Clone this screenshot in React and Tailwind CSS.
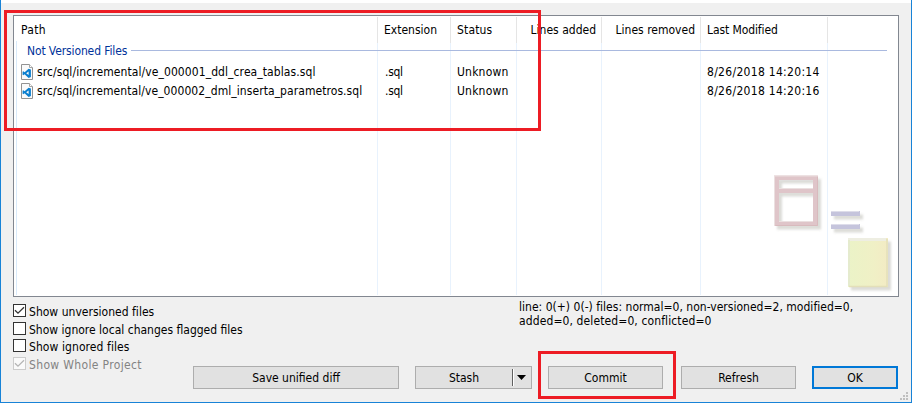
import React from "react";

const COLUMNS = "grid grid-cols-[364px_73px_66px_85px_99px_127px_70px]";

const files = [
  { path: "src/sql/incremental/ve_000001_ddl_crea_tablas.sql", spacing: "tracking-[0.085px]", date: "8/26/2018 14:20:14" },
  { path: "src/sql/incremental/ve_000002_dml_inserta_parametros.sql", spacing: "tracking-[0.07px]", date: "8/26/2018 14:20:16" },
];

function FileIcon() {
  return (
    <svg className="h-4 w-3 shrink-0" viewBox="0 0 12 16">
      <path d="M.5.5h8l3 3v12H.5z" fill="#fafafa" stroke="#929292" />
      <path d="M8.5.5v3h3" fill="#fff" stroke="#a5a5a5" />
      <path d="M7.600 4.700 9.900 5.600v7.500l-2.300.8-4-3.600-1.300 1-.7-.5V7.700l.7-.4 1.300 1zM7.600 7.600 5.200 9.300l2.400 1.800z" fill="#0a7fd0" fillRule="evenodd" />
    </svg>
  );
}

function Check({ label, checked, disabled, spacing = "", className = "" }) {
  return (
    <label className={`flex h-[13px] items-center ${className}`}>
      <span className={`h-[13px] w-[13px] shrink-0 border ${disabled ? "border-[#cccccc] bg-[#fafafa]" : "border-[#333333] bg-white"}`}>
        {checked && (
          <svg className="block h-[11px] w-[11px]" viewBox="0 0 11 11">
            <path d="M1 5.200 4 8.200 10 2.200" fill="none" stroke={disabled ? "#b5b5b5" : "#333"} strokeWidth="1.300" />
          </svg>
        )}
      </span>
      <span className={`ml-[3px] pt-[2px] ${spacing} ${disabled ? "text-[#838383]" : ""}`}>{label}</span>
    </label>
  );
}

function Watermark() {
  return (
    <svg className="absolute top-[154px] left-[756px] h-[126px] w-[126px]" viewBox="770 170 126 126">
      <defs>
        <filter id="shade" x="-20%" y="-50%" width="150%" height="250%">
          <feDropShadow dx="3" dy="3.500" stdDeviation="1.300" floodColor="#777766" floodOpacity=".26" />
        </filter>
        <linearGradient id="paper">
          <stop offset="0" stopColor="#ebf3c7" />
          <stop offset=".65" stopColor="#f0f0c6" />
          <stop offset="1" stopColor="#f3ebc4" />
        </linearGradient>
      </defs>
      <path filter="url(#shade)" d="M774 175.500h44v50.500h-44zM779 180v8h34v-8zM779 193v28h34v-28z" fill="#dfc5c9" fillRule="evenodd" />
      <path d="M774.500 226v-50h43M779 221.500h34M779 188.500h34" fill="none" stroke="#ebe0e0" />
      <path d="M817.500 177v48.500h-42" fill="none" stroke="#d8babd" />
      <g filter="url(#shade)" fill="#c5c4dc">
        <path d="M831 211h29v5h-29z" />
        <path d="M831 224h29v5h-29z" />
      </g>
      <path d="M831 211.500h28M831 224.500h28" stroke="#deddea" />
      <path filter="url(#shade)" d="M848 238h40v49h-40z" fill="url(#paper)" />
      <path d="M848 239.500h38" stroke="#eeeee2" strokeWidth="3" />
      <path d="M849 240v46" stroke="#e5ebce" strokeWidth="2" />
      <path d="M887 239v47.500h-38" fill="none" stroke="#e3dfb9" strokeWidth="1.500" />
    </svg>
  );
}

function Button({ children, className, border = "border border-[#adadad]" }) {
  return (
    <button className={`flex h-[23px] items-center justify-center bg-[#e1e1e1] ${border} ${className}`}>
      {children}
    </button>
  );
}

function Grip() {
  return (
    <svg className="absolute right-[3px] bottom-[2px] h-2 w-2" viewBox="0 0 8 8" fill="#bfbfbf" shapeRendering="crispEdges">
      <path d="M6 0h2v2H6zM3 3h2v2H3zM6 3h2v2H6zM0 6h2v2H0zM3 6h2v2H3zM6 6h2v2H6z" />
    </svg>
  );
}

export default function App() {
  return (
    <div className="relative flex h-[403px] w-[912px] flex-col overflow-hidden border-x border-b border-[#1883d7] bg-[#f0f0f0] font-['DejaVu_Sans_Condensed','DejaVu_Sans',sans-serif] text-[12px] leading-[14px] whitespace-nowrap text-black [font-stretch:condensed]">
      <div className="h-[3px] shrink-0 bg-white" />

      <section className="relative mt-3 ml-3 h-[282px] w-[886px] shrink-0 border border-[#828790] bg-white">
        <div className={`absolute inset-x-0 top-[25px] bottom-px ${COLUMNS}`}>
          {[0, 1, 2, 3, 4, 5].map((i) => (
            <div key={i} className="border-r border-[#e8f2fd]" />
          ))}
        </div>
        <div className="absolute top-[25px] bottom-px left-[2px] w-px bg-[#d9eafa]" />
        <Watermark />

        <div className={`relative mt-px h-6 leading-[26px] ${COLUMNS}`}>
          <div className="border-r border-[#e5e5e5] pl-[7px] tracking-[0.3px]">Path</div>
          <div className="border-r border-[#e5e5e5] pl-[6px]">Extension</div>
          <div className="border-r border-[#e5e5e5] pl-[6px] tracking-[0.15px]">Status</div>
          <div className="border-r border-[#e5e5e5] pr-[5px] text-right">Lines added</div>
          <div className="border-r border-[#e5e5e5] pr-[5px] text-right">Lines removed</div>
          <div className="border-r border-[#e5e5e5] pl-[6px] tracking-[-0.1px]">Last Modified</div>
        </div>

        <div className="relative flex h-[21px] items-center pr-[11px] pl-[13px] text-[#003399]">
          <span className="-mt-[2px] w-[100px] tracking-[-0.12px]">Not Versioned Files</span>
          <span className="-mt-[2px] ml-1 h-px flex-1 bg-[#a9b9df]" />
        </div>

        {files.map((file) => (
          <div key={file.path} className={`relative h-[19px] items-center ${COLUMNS}`}>
            <div className="flex items-center gap-1 pl-[7px]">
              <FileIcon />
              <span className={file.spacing}>{file.path}</span>
            </div>
            <div className="pl-[7px] tracking-[-0.3px]">.sql</div>
            <div className="pl-[6px] tracking-[0.2px]">Unknown</div>
            <div />
            <div />
            <div className="pl-[6px] tracking-[0.3px]">{file.date}</div>
          </div>
        ))}
      </section>

      <div className="flex justify-between pl-3">
        <div className="flex flex-col pt-[7px]">
          <Check label="Show unversioned files" checked spacing="tracking-[0.02px]" />
          <Check label="Show ignore local changes flagged files" className="mt-[5px]" />
          <Check label="Show ignored files" className="mt-[4px]" spacing="tracking-[0.08px]" />
          <Check label="Show Whole Project" checked disabled className="mt-[5px]" spacing="tracking-[0.35px]" />
        </div>
        <p className="w-[392px] pt-[3px]">
          <span className="tracking-[0.02px]">line: 0(+) 0(-) files: normal=0, non-versioned=2, modified=0,</span>
          <br />
          <span className="tracking-[0.11px]">added=0, deleted=0, conflicted=0</span>
        </p>
      </div>

      <div className="-mt-1 flex pl-[192px]">
        <Button className="w-[206px]">Save unified diff</Button>
        <Button className="ml-4 w-[117px]">
          <span className="flex-1 text-center">Stash</span>
          <span className="mr-[5px] flex h-[17px] w-[14px] items-center justify-end border-l border-[#606060] shadow-[inset_1px_0_0_#fff]">
            <svg className="h-[5px] w-[9px]" viewBox="0 0 9 5">
              <path d="M0 0h9L4.500 5z" />
            </svg>
          </span>
        </Button>
        <Button className="ml-4 w-[115px]">Commit</Button>
        <Button className="ml-[18px] w-[115px]">Refresh</Button>
        <Button className="ml-4 w-[86px]" border="border-2 border-[#0078d7]">OK</Button>
      </div>

      <Grip />
      <div className="absolute top-[10px] left-[3px] h-[121px] w-[537px] border-3 border-[#ed1c24]" />
      <div className="absolute top-[351px] left-[537px] h-12 w-[138px] border-3 border-[#ed1c24]" />
    </div>
  );
}
